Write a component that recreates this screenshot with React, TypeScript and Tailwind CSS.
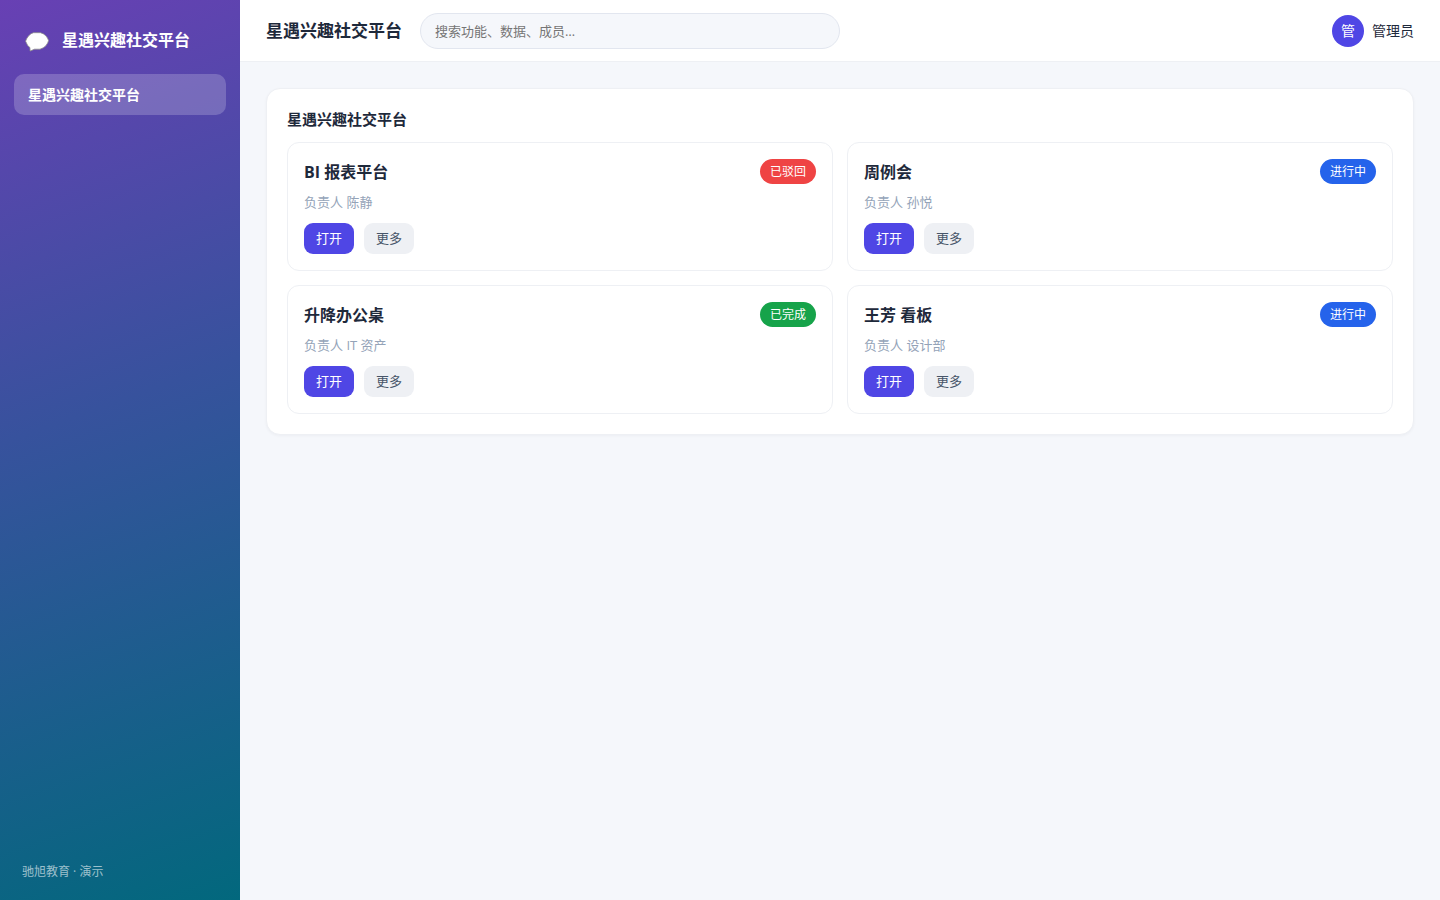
import { useState } from 'react';

type Status = 'rejected' | 'active' | 'done';

interface Item {
  id: number;
  title: string;
  owner: string;
  status: Status;
}

const APP_NAME = '星遇兴趣社交平台';

const items: Item[] = [
  { id: 1, title: 'BI 报表平台', owner: '陈静', status: 'rejected' },
  { id: 2, title: '周例会', owner: '孙悦', status: 'active' },
  { id: 3, title: '升降办公桌', owner: 'IT 资产', status: 'done' },
  { id: 4, title: '王芳 看板', owner: '设计部', status: 'active' },
];

const statuses: Record<Status, { label: string; className: string }> = {
  rejected: { label: '已驳回', className: 'bg-[#ef4444]' },
  active: { label: '进行中', className: 'bg-[#2563eb]' },
  done: { label: '已完成', className: 'bg-[#16a34a]' },
};

function ChatBubble() {
  return (
    <svg viewBox="0 0 24 20" className="w-6 h-5" aria-hidden="true">
      <path
        d="M8.500 0.700h7l3 1.200 2.400 1.900 1.600 2.300 1.100 2.400-0.900 2.500-2 2.900-2.400 1.900-3.300 1.400H9.500l-4.400 1.900-0.200-3.600-2.200-1.900L0.600 9.200l0.900-2.300 1.900-2.800L6 1.700z"
        fill="#fff"
        stroke="#8b8b8b"
        strokeWidth="0.8"
      />
    </svg>
  );
}

function Sidebar() {
  return (
    <aside className="w-60 shrink-0 flex flex-col px-3.5 py-5 text-white bg-[linear-gradient(160deg,#6840b4_0%,#37529d_45%,#02687d_100%)]">
      <div className="flex items-center gap-2.5 px-2 h-10">
        <span className="w-[30px] pt-1 flex justify-center">
          <ChatBubble />
        </span>
        <span className="text-base font-semibold">{APP_NAME}</span>
      </div>
      <nav className="mt-3.5">
        <a href="#" className="block px-3.5 py-2.5 rounded-[10px] bg-white/20 text-sm leading-[21px] font-semibold">
          {APP_NAME}
        </a>
      </nav>
      <p className="mt-auto px-2 text-xs leading-4 text-white/60">驰旭教育 · 演示</p>
    </aside>
  );
}

function ItemCard({ item }: { item: Item }) {
  const status = statuses[item.status];

  return (
    <article className="p-4 border border-[#eef0f4] rounded-xl">
      <div className="flex items-center justify-between">
        <h3 className="text-base font-bold">{item.title}</h3>
        <span className={`px-2.5 py-1 rounded-full text-xs leading-[17px] text-white ${status.className}`}>
          {status.label}
        </span>
      </div>
      <p className="mt-2 text-[13px] leading-5 text-[#94a3b8]">负责人 {item.owner}</p>
      <div className="mt-[11px] flex gap-2.5">
        <button className="px-3 py-1.5 rounded-[9px] bg-[#4f46e5] text-white text-[13px] leading-[19px]">打开</button>
        <button className="px-3 py-1.5 rounded-[9px] bg-[#eef0f4] text-[#475569] text-[13px] leading-[19px]">更多</button>
      </div>
    </article>
  );
}

export default function App() {
  const [query, setQuery] = useState('');

  return (
    <div className="flex min-h-screen bg-[#f5f7fb] text-[#1e293b] font-['Open_Sans','Noto_Sans_CJK_SC',sans-serif]">
      <Sidebar />
      <div className="flex-1 min-w-0">
        <header className="h-[62px] px-[26px] flex items-center gap-[18px] bg-white border-b border-[#eef0f4]">
          <h1 className="text-[17px] font-bold whitespace-nowrap">{APP_NAME}</h1>
          <input
            type="search"
            aria-label="搜索"
            placeholder="搜索功能、数据、成员…"
            value={query}
            onChange={(e) => setQuery(e.target.value)}
            className="w-full max-w-[420px] h-9 px-3.5 rounded-full border border-[#e2e6ef] bg-[#f5f7fb] text-[13px] placeholder:text-[#757575] outline-none"
          />
          <div className="ml-auto flex items-center gap-2 text-sm whitespace-nowrap">
            <span className="size-8 rounded-full bg-[#4f46e5] text-white flex items-center justify-center">管</span>
            <span>管理员</span>
          </div>
        </header>
        <main className="p-[26px]">
          <section className="p-5 bg-white border border-[#eef0f4] rounded-[14px] shadow-[0_1px_3px_rgba(15,23,42,0.04)]">
            <h2 className="mb-[13px] text-[15px] leading-5 font-bold">{APP_NAME}</h2>
            <div className="grid grid-cols-2 gap-3.5">
              {items.map((item) => (
                <ItemCard key={item.id} item={item} />
              ))}
            </div>
          </section>
        </main>
      </div>
    </div>
  );
}
